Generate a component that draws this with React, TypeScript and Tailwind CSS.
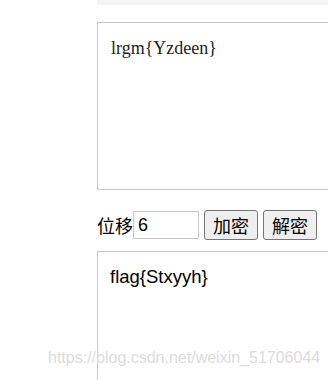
export default function App() {
    return (
        <div className="relative w-[328px] h-[380px] overflow-hidden bg-white font-['Liberation_Sans','Noto_Sans_CJK_SC',sans-serif]">
            <div className="ml-[97px] w-[300px] h-[5px] bg-[#f5f5f5]" />

            <textarea
                readOnly
                defaultValue="lrgm{Yzdeen}"
                className="block ml-[97px] mt-[17px] w-[300px] h-[168px] border border-[#c8c8c8] px-[13px] pt-[14px] resize-none outline-none text-[18px] leading-[22px] text-[#222] font-['Liberation_Serif','Noto_Sans_CJK_SC',serif]"
            />

            <div className="flex items-center ml-[97px] mt-[20px] h-[30px]">
                <span className="text-[18px] text-black font-['Noto_Sans_CJK_SC',sans-serif] leading-none">位移</span>
                <input
                    readOnly
                    defaultValue="6"
                    className="w-[66px] h-[28px] border border-[#c8c8c8] px-[4px] text-[18px] text-black outline-none"
                />
                <button className="ml-[5px] w-[54px] h-[30px] border border-[#767676] rounded-[3px] bg-[#efefef] text-[18px] text-black font-['Noto_Sans_CJK_SC',sans-serif] leading-none">
                    加密
                </button>
                <button className="ml-[5px] w-[54px] h-[30px] border border-[#767676] rounded-[3px] bg-[#efefef] text-[18px] text-black font-['Noto_Sans_CJK_SC',sans-serif] leading-none">
                    解密
                </button>
            </div>

            <textarea
                readOnly
                defaultValue="flag{Stxyyh}"
                className="block ml-[97px] mt-[11px] w-[300px] h-[168px] border border-[#c8c8c8] px-[12px] pt-[13px] resize-none outline-none text-[18.5px] leading-[24px] text-black"
            />

            <div className="absolute left-[48px] top-[350px] text-[16px] text-[#dcdcdc] leading-none pointer-events-none">
                https://blog.csdn.net/weixin_51706044
            </div>
        </div>
    );
}
